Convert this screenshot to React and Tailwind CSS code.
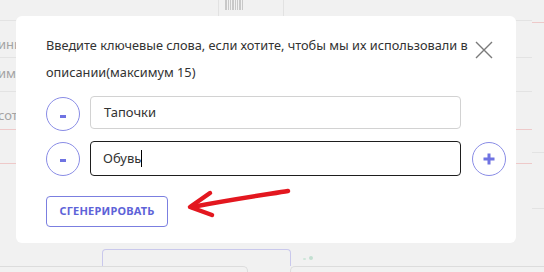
import React from 'react'

function Circle({ children }) {
  return (
    <button className="w-[34px] h-[34px] shrink-0 rounded-full border border-[#8a8de6] bg-white flex items-center justify-center">
      {children}
    </button>
  )
}

function Minus() {
  return <span className="block w-[6px] h-[3px] bg-[#6f73e2] mt-[4px]" />
}

function Plus() {
  return (
    <svg width="14" height="14" viewBox="0 0 14 14">
      <path d="M7 1.5v11M1.5 7h11" stroke="#6f73e2" strokeWidth="3" />
    </svg>
  )
}

function Arrow() {
  return (
    <svg className="absolute left-[180px] top-[178px]" width="120" height="45" viewBox="0 0 120 45">
      <path d="M108 13 C 90 16, 60 20, 12 29" stroke="#e3171f" strokeWidth="4.5" fill="none" strokeLinecap="round" />
      <path d="M30 15 L 10 29 L 32 37" stroke="#e3171f" strokeWidth="4.5" fill="none" strokeLinecap="round" strokeLinejoin="round" />
    </svg>
  )
}

export default function App() {
  return (
    <div className="relative w-[544px] h-[272px] overflow-hidden bg-[#f1f1f1] font-['Noto_Sans',sans-serif]">
      <div className="flex h-[243px]">
        {/* left table behind */}
        <div className="w-[16px] flex flex-col text-[13px] text-[#a3a3a3] whitespace-nowrap">
          <div className="h-[21px] border-b border-[#e3e3e3]" />
          <div className="h-[37px] border-b border-[#e3e3e3] pt-[14px] -ml-[2px]">ини</div>
          <div className="h-[34px] border-b border-[#e3e3e3] pt-[6px] -ml-[2px]">имм</div>
          <div className="h-[38px] border-b border-[#eec9c9] pt-[14px] -ml-[2px]">сот</div>
          <div className="h-[34px] border-b border-[#eec9c9]" />
        </div>

        <div className="w-[500px] flex flex-col">
          <div className="h-[16px] flex">
            <div className="ml-[202px] w-[66px] border-l border-r border-[#e2e2e2] pl-[6px] flex gap-[1px] items-start">
              {[2, 1, 1, 2, 1, 1, 2, 1].map((w, i) => (
                <span key={i} style={{ width: w }} className="block h-[10px] bg-[#c8c8c8]" />
              ))}
            </div>
          </div>

          {/* modal */}
          <div className="h-[227px] bg-white rounded-[6px] pl-[30px] pr-[10px] pt-[16px] text-[#333]">
            <div className="flex">
              <p className="w-[424px] text-[12.75px] leading-[27px]">
                Введите ключевые слова, если хотите, чтобы мы их использовали в описании(максимум 15)
              </p>
              <button className="ml-[4px] mt-[8px] w-[20px] h-[20px] flex items-center justify-center">
                <svg width="18" height="18" viewBox="0 0 18 18">
                  <path d="M1 1L17 17M17 1L1 17" stroke="#7a7a7a" strokeWidth="1.4" />
                </svg>
              </button>
            </div>

            <div className="mt-[11px] flex items-center gap-[10px]">
              <Circle><Minus /></Circle>
              <div className="w-[371px] h-[33px] -mt-[3px] rounded-[4px] border border-[#d2d2d2] flex items-center px-[13px] text-[13px]">
                Тапочки
              </div>
            </div>

            <div className="mt-[10px] flex items-center gap-[10px]">
              <Circle><Minus /></Circle>
              <div className="w-[371px] h-[35px] rounded-[4px] border-[1.5px] border-[#1e1e1e] flex items-center px-[12px] text-[13px]">
                Обувь<span className="block w-px h-[17px] bg-black" />
              </div>
              <div className="ml-px">
                <Circle><Plus /></Circle>
              </div>
            </div>

            <button className="mt-[20px] w-[122px] h-[31px] rounded-[4px] border border-[#7b7fe0] text-[11px] font-bold text-[#5e63d8] tracking-[0.2px] uppercase">
              Сгенерировать
            </button>
          </div>
        </div>

        {/* right table behind */}
        <div className="flex-1 flex">
          <div className="w-[16px] flex flex-col">
            <div className="h-[21px] border-b border-[#e3e3e3]" />
            <div className="h-[37px] border-b border-[#e3e3e3]" />
            <div className="h-[34px] border-b border-[#e3e3e3]" />
            <div className="h-[38px] border-b border-[#eec9c9]" />
            <div className="h-[34px] border-b border-[#eec9c9]" />
          </div>
          <div className="flex-1 flex flex-col">
            <div className="h-[23px] border-b border-[#eec9c9]" />
            <div className="h-[130px] border-b border-[#e3e3e3]" />
            <div className="h-[56px] border-b border-[#e3e3e3]" />
          </div>
        </div>
      </div>

      {/* bottom strip behind */}
      <div className="h-[29px] flex flex-col">
        <div className="h-[23px] flex items-start pt-[6px]">
          <div className="ml-[102px] w-[189px] h-[17px] rounded-t-[4px] border border-b-0 border-[#c9c8ec]" />
          <div className="ml-[12px] mt-[7px] flex gap-[3px] items-end">
            <span className="block w-[3px] h-[2px] rounded-full bg-[#cfe6da]" />
            <span className="block w-[4px] h-[4px] rounded-full bg-[#c3e0d1]" />
          </div>
        </div>
        <div className="flex gap-[42px]">
          <div className="w-[248px] h-[10px] rounded-tr-[5px] border-t border-r border-[#dcdcdc]" />
          <div className="flex-1 h-[10px] rounded-tl-[5px] border-t border-l border-[#dcdcdc]" />
        </div>
      </div>

      <Arrow />
    </div>
  )
}
